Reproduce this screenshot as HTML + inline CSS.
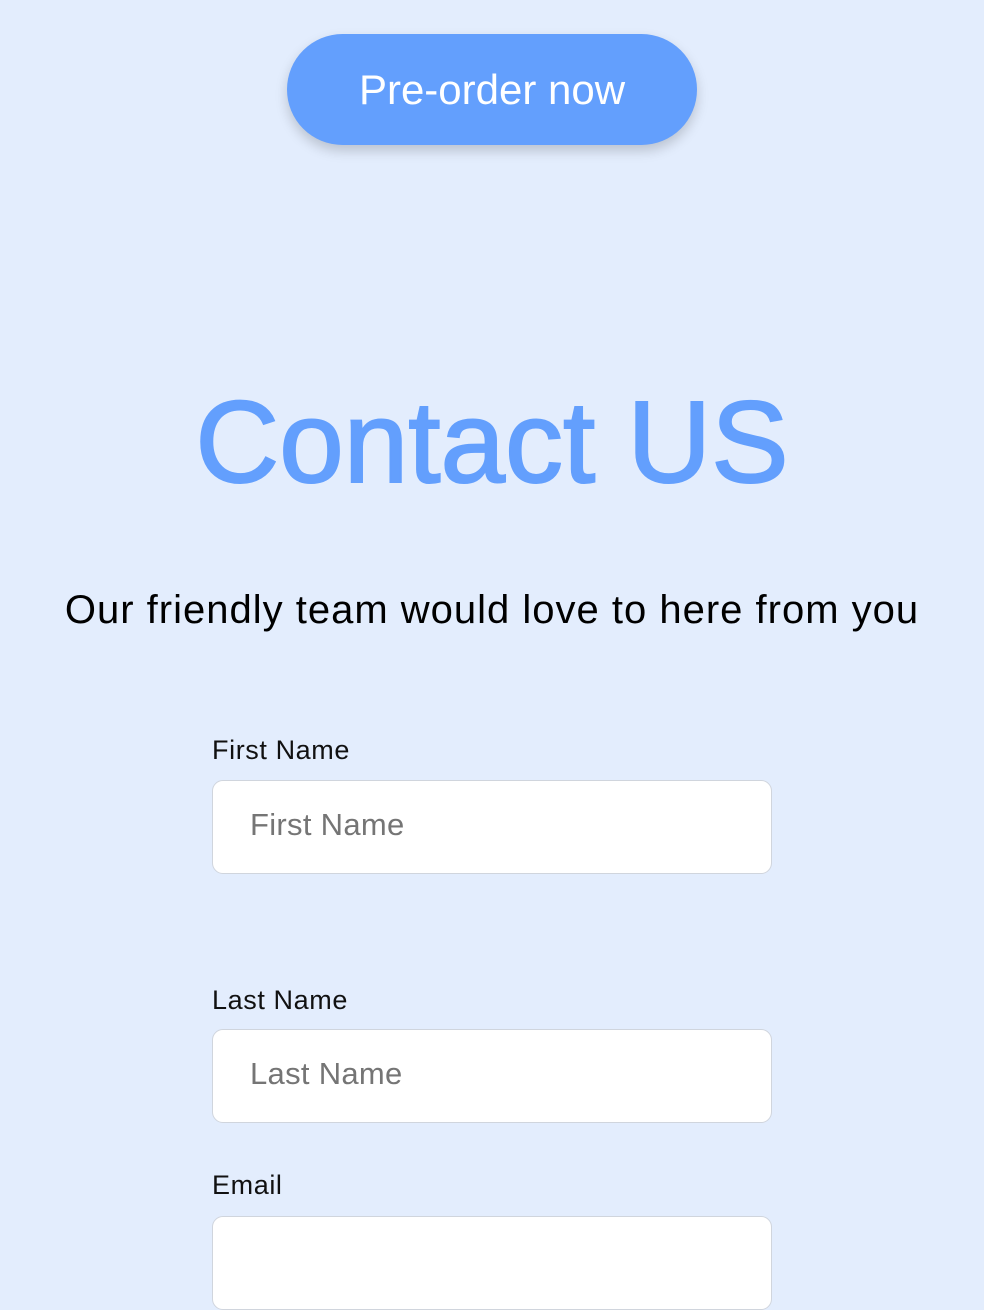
<!DOCTYPE html>
<html><head><style>
html,body{margin:0;padding:0;}
body{width:984px;height:1226px;background:#e3edfd;font-family:"Liberation Sans",sans-serif;position:relative;overflow:hidden;}
.btn{position:absolute;left:287px;top:34px;width:410px;height:111px;border-radius:56px;background:#639ffd;box-shadow:0 6px 12px rgba(0,0,0,0.18);color:#fff;font-size:42px;line-height:111px;text-align:center;}
h1{position:absolute;left:0;width:984px;top:372px;margin:0;text-align:center;font-size:116px;font-weight:normal;color:#639ffd;line-height:140px;-webkit-text-stroke:2px #639ffd;}
.sub{position:absolute;left:0;width:984px;top:585px;text-align:center;font-size:40px;letter-spacing:1px;color:#000;line-height:50px;}
.lbl{position:absolute;left:212px;font-size:27px;letter-spacing:0.6px;color:#111;}
.inp{position:absolute;left:212px;width:558px;height:92px;background:#fff;border:1px solid #d0d5dd;border-radius:11px;box-sizing:content-box;}
.inp span{position:absolute;left:37px;top:0;line-height:88px;font-size:31px;letter-spacing:0.3px;color:#757575;}
</style></head><body>
<div class="btn">Pre-order now</div>
<h1>Contact US</h1>
<div class="sub">Our friendly team would love to here from you</div>
<div class="lbl" style="top:735px">First Name</div>
<div class="inp" style="top:780px"><span>First Name</span></div>
<div class="lbl" style="top:985px">Last Name</div>
<div class="inp" style="top:1029px"><span>Last Name</span></div>
<div class="lbl" style="top:1170px">Email</div>
<div class="inp" style="top:1216px"></div>
</body></html>
